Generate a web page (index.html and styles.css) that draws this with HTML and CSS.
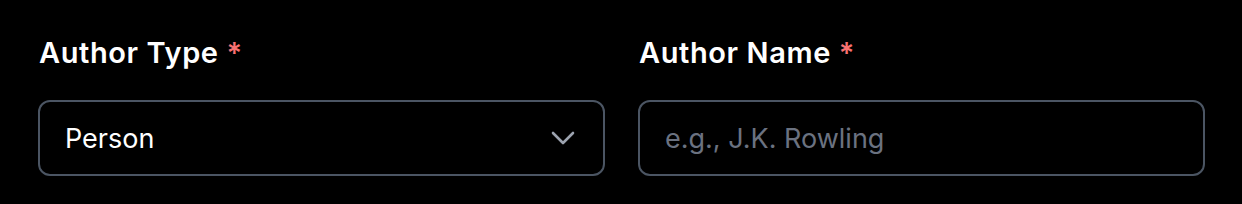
FILE: index.html
```html
<!DOCTYPE html>
<html>
<head>
<meta charset="utf-8">
<link rel="stylesheet" href="styles.css">
</head>
<body>
<div class="form">
  <div class="field">
    <label class="label">Author Type <span class="req">*</span></label>
    <div class="select">
      <span class="value">Person</span>
      <svg class="chev" width="24" height="14" viewBox="0 0 24 14" fill="none" stroke="currentColor" stroke-width="2.6" stroke-linecap="round" stroke-linejoin="round"><polyline points="2,2 12,12 22,2"/></svg>
    </div>
  </div>
  <div class="field">
    <label class="label">Author Name <span class="req">*</span></label>
    <div class="input"><span class="placeholder">e.g., J.K. Rowling</span></div>
  </div>
</div>
</body>
</html>
```
FILE: styles.css
```css
html, body {
  margin: 0;
  padding: 0;
  background: #000;
}
body {
  font-family: Inter, "Noto Sans", sans-serif;
  color: #fff;
}
.form {
  display: grid;
  grid-template-columns: 1fr 1fr;
  column-gap: 33px;
  padding: 31px 37px 0 38px;
}
.field {
  display: flex;
  flex-direction: column;
}
.label {
  font-size: 29px;
  font-weight: 600;
  letter-spacing: 0.6px;
  line-height: 44px;
  margin-bottom: 25px;
  padding-left: 1px;
}
.req {
  color: #f87171;
}
.select, .input {
  box-sizing: border-box;
  height: 76px;
  border: 2px solid #4b5563;
  border-radius: 12px;
  display: flex;
  align-items: center;
  padding: 0 28px 0 25px;
  font-size: 27px;
}
.select {
  justify-content: space-between;
}
.value {
  color: #fff;
}
.placeholder {
  color: #6b7280;
}
.chev {
  color: #9ca3af;
  width: 24px;
  height: 14px;
}
```
